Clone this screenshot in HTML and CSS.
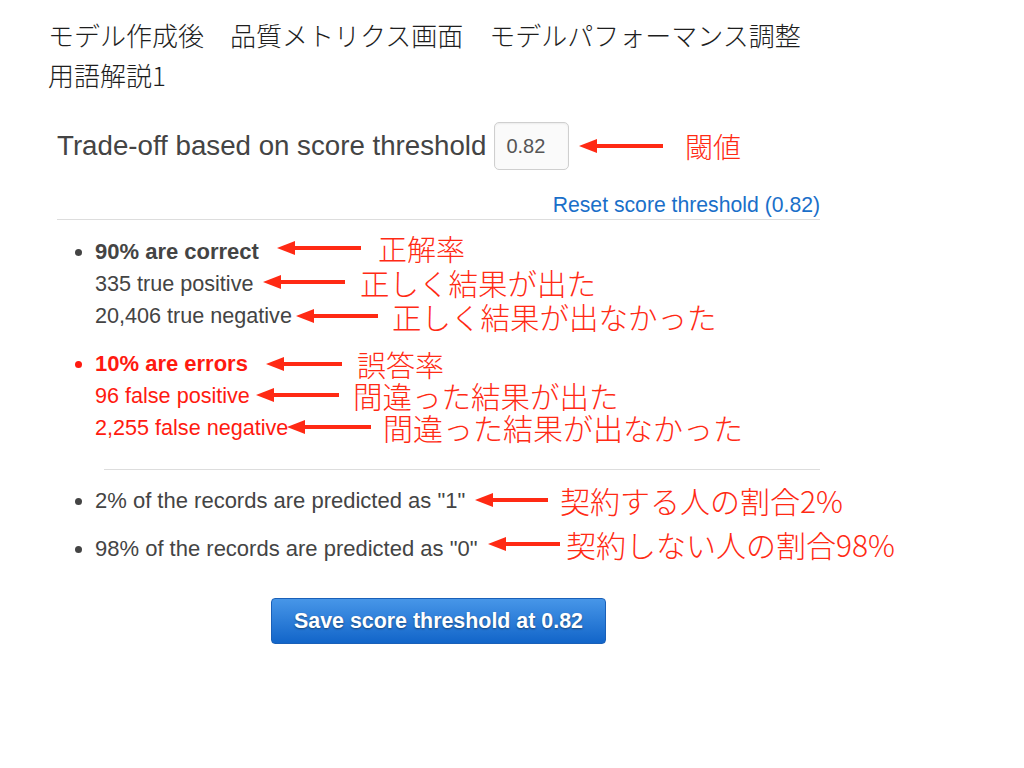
FILE: index.html
```html
<!DOCTYPE html>
<html lang="ja">
<head>
<meta charset="utf-8">
<title>モデル作成後 品質メトリクス画面</title>
<link rel="stylesheet" href="styles.css">
</head>
<body>
<div class="page">
  <h1 class="title">モデル作成後　品質メトリクス画面　モデルパフォーマンス調整<br>用語解説1</h1>

  <div class="panel">
    <div class="trade-row">
      <h2 class="trade-heading">Trade-off based on score threshold</h2>
      <div class="score-input">0.82</div>
    </div>
    <div class="reset-row"><a class="reset-link" href="#">Reset score threshold (0.82)</a></div>
    <hr class="divider">

    <ul class="stats">
      <li class="correct">
        <div class="head">90% are correct</div>
        <div>335 true positive</div>
        <div>20,406 true negative</div>
      </li>
      <li class="errors">
        <div class="head">10% are errors</div>
        <div>96 false positive</div>
        <div>2,255 false negative</div>
      </li>
    </ul>
    <hr class="divider inner">
    <ul class="preds">
      <li>2% of the records are predicted as "1"</li>
      <li>98% of the records are predicted as "0"</li>
    </ul>
    <button class="save-btn">Save score threshold at 0.82</button>
  </div>

  <div class="note n1"><span class="arrow"></span><span class="label">閾値</span></div>
  <div class="note n2"><span class="arrow"></span><span class="label">正解率</span></div>
  <div class="note n3"><span class="arrow"></span><span class="label">正しく結果が出た</span></div>
  <div class="note n4"><span class="arrow"></span><span class="label">正しく結果が出なかった</span></div>
  <div class="note n5"><span class="arrow"></span><span class="label">誤答率</span></div>
  <div class="note n6"><span class="arrow"></span><span class="label">間違った結果が出た</span></div>
  <div class="note n7"><span class="arrow"></span><span class="label">間違った結果が出なかった</span></div>
  <div class="note n8"><span class="arrow"></span><span class="label">契約する人の割合2%</span></div>
  <div class="note n9"><span class="arrow"></span><span class="label">契約しない人の割合98%</span></div>
</div>
</body>
</html>
```

FILE: styles.css
```css
html, body {
  margin: 0;
  padding: 0;
  background: #ffffff;
}

.page {
  position: relative;
  width: 1024px;
  height: 768px;
  overflow: hidden;
  padding: 15px 0 0 0;
  box-sizing: border-box;
  font-family: "Liberation Sans", Arial, "Noto Sans CJK JP", sans-serif;
}

.title {
  margin: 0 0 0 48px;
  font-family: "Noto Sans CJK JP", sans-serif;
  font-weight: 300;
  font-size: 26px;
  line-height: 40px;
  color: #1e1e1e;
}

.panel {
  margin: 27px 0 0 57px;
  width: 763px;
  color: #444444;
}

.trade-row {
  display: flex;
  align-items: center;
  gap: 8px;
  height: 48px;
}

.trade-heading {
  margin: 0;
  font-weight: 400;
  font-size: 27.7px;
  color: #444444;
}

.score-input {
  width: 75px;
  height: 48px;
  box-sizing: border-box;
  border: 1px solid #cfcfcf;
  border-radius: 5px;
  background: #fafafa;
  box-shadow: inset 0 1px 2px rgba(0,0,0,0.06);
  padding-left: 11px;
  display: flex;
  align-items: center;
  font-size: 20px;
  color: #555555;
}

.reset-row {
  margin-top: 23px;
  text-align: right;
  line-height: 24px;
}

.reset-link {
  font-size: 21.2px;
  color: #1a6fc9;
  text-decoration: none;
}

.divider {
  margin: 0;
  border: 0;
  border-top: 1px solid #dddddd;
  height: 0;
}

.divider.inner {
  margin: 25px 0 0 47px;
}

.stats, .preds {
  margin: 16px 0 0 0;
  padding: 0 0 0 38px;
  font-size: 21.6px;
  line-height: 32px;
}

.stats li + li {
  margin-top: 16px;
}

.stats .head {
  font-weight: 700;
  font-size: 22px;
}

.stats .correct {
  color: #444444;
}

.stats .errors {
  color: #ff1a10;
}

.preds {
  margin-top: 15px;
  font-size: 22px;
}

.preds li + li {
  margin-top: 16px;
}

.save-btn {
  display: block;
  margin: 33px 0 0 214px;
  width: 335px;
  height: 46px;
  border: 1px solid #1a60b8;
  border-radius: 4px;
  background: linear-gradient(#4796e8, #1265c9);
  color: #ffffff;
  font-family: "Liberation Sans", Arial, sans-serif;
  font-weight: 700;
  font-size: 21.4px;
  text-shadow: 0 1px 2px rgba(0,0,0,0.45);
  padding: 0;
  cursor: pointer;
}

/* annotation overlay */
.note {
  position: absolute;
  display: flex;
  align-items: center;
  height: 28px;
  margin-top: -14px;
  font-family: "Noto Sans CJK JP", sans-serif;
  font-weight: 300;
  color: #ff2a14;
}

.arrow {
  position: relative;
  display: block;
  height: 4px;
  margin-left: 18px;
  background: #ff2a14;
}

.arrow::before {
  content: "";
  position: absolute;
  left: -18px;
  top: -5px;
  border-right: 18px solid #ff2a14;
  border-top: 7px solid transparent;
  border-bottom: 7px solid transparent;
}

.label {
  font-size: 29px;
  line-height: 28px;
  white-space: nowrap;
}

.n1 { left: 579px; top: 146px; gap: 22px; }
.n1 .arrow { width: 66px; }
.n1 .label { font-size: 28px; }

.n2 { left: 277px; top: 248px; gap: 17px; }
.n2 .arrow { width: 66px; }

.n3 { left: 263px; top: 282px; gap: 15px; }
.n3 .arrow { width: 64px; }
.n3 .label { font-size: 29.5px; }

.n4 { left: 296px; top: 316px; gap: 14px; }
.n4 .arrow { width: 64px; }
.n4 .label { font-size: 29.5px; }

.n5 { left: 266px; top: 364px; gap: 15px; }
.n5 .arrow { width: 58px; }

.n6 { left: 256px; top: 395px; gap: 14px; }
.n6 .arrow { width: 65px; }
.n6 .label { font-size: 29.5px; }

.n7 { left: 287px; top: 427px; gap: 12px; }
.n7 .arrow { width: 66px; }
.n7 .label { font-size: 30px; }

.n8 { left: 475px; top: 500px; gap: 12px; }
.n8 .arrow { width: 55px; }
.n8 .label { font-size: 30px; }

.n9 { left: 488px; top: 544px; gap: 6px; }
.n9 .arrow { width: 54px; }
.n9 .label { font-size: 30px; }
```
